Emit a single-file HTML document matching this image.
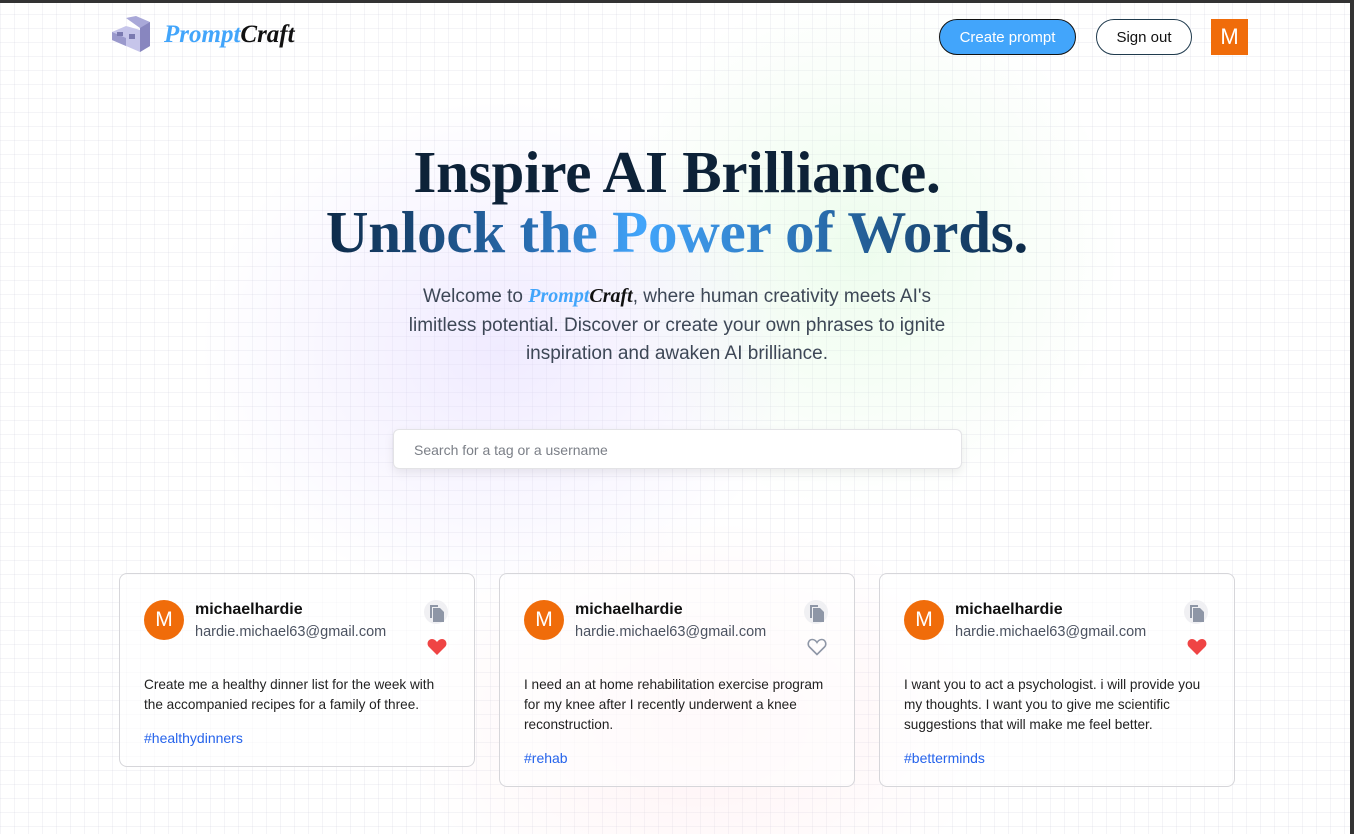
<!DOCTYPE html>
<html><head><meta charset="utf-8"><style>
*{box-sizing:border-box;margin:0;padding:0}
body{width:1354px;height:834px;overflow:hidden;font-family:"Liberation Sans",sans-serif;background:#fff;position:relative;}
.bg{position:absolute;inset:0;background-image:linear-gradient(rgba(200,200,215,.2) 1px,transparent 1px),linear-gradient(90deg,rgba(200,200,215,.2) 1px,transparent 1px);background-size:14px 14px;}
.glow{position:absolute;inset:0;background:radial-gradient(ellipse 300px 250px at 500px 350px,rgba(225,215,255,.5),transparent),radial-gradient(ellipse 260px 260px at 860px 250px,rgba(220,250,220,.5),transparent),radial-gradient(ellipse 300px 200px at 700px 720px,rgba(255,225,230,.45),transparent)}
.rb{position:absolute;right:0;top:0;width:4px;height:834px;background:#333}
.tb{position:absolute;left:0;top:0;width:1354px;height:3px;background:#333}
.nav{position:absolute;top:16px;left:112px;right:106px;height:40px}
.logo{position:absolute;left:0;top:0;display:flex;align-items:center}
.logo span{font-family:"Liberation Serif",serif;font-style:italic;font-weight:bold;font-size:25px;margin-left:12px}
.btn{position:absolute;top:3px;height:36px;border-radius:18px;font-size:15px;display:flex;align-items:center;justify-content:center}
.cp{left:827px;width:137px;background:#42a5fb;color:#fff;border:1.5px solid #111}
.so{left:984px;width:96px;background:#fff;border:1.5px solid #1f3a4d;color:#111}
.av{position:absolute;left:1099px;top:3px;width:37px;height:36px;background:#f06c0a;color:#fff;font-size:22px;display:flex;align-items:center;justify-content:center}
h1{position:absolute;top:142px;left:0;width:1354px;text-align:center;font-family:"Liberation Serif",serif;font-weight:bold;font-size:59px;line-height:60px;color:#0d2238;letter-spacing:-0.2px}
.g{background:linear-gradient(90deg,#0d2a48 0%,#2a6fb4 30%,#42a5fb 45%,#2f7ac0 65%,#0d2a48 100%);-webkit-background-clip:text;background-clip:text;color:transparent}
.sub{position:absolute;top:282px;left:397px;width:560px;text-align:center;font-size:19px;line-height:28.5px;color:#3d4756}
.sub i{font-family:"Liberation Serif",serif;font-weight:bold;font-size:20px}
.search{position:absolute;top:429px;left:393px;width:569px;height:40px;background:#fff;border:1px solid #e3e3e6;border-radius:6px;box-shadow:0 4px 10px rgba(0,0,0,.08);font-size:14px;color:#7b7f87;padding:12px 20px}
.card{position:absolute;top:573px;width:356px;background:rgba(255,255,255,.6);border:1px solid #d6d6da;border-radius:8px;padding:26px 24px}
.card .a{position:absolute;left:24px;top:26px;width:40px;height:40px;border-radius:50%;background:#f06c0a;color:#fff;font-size:21px;display:flex;align-items:center;justify-content:center}
.nm{position:absolute;left:75px;top:27px;font-weight:bold;font-size:16px;color:#111}
.em{position:absolute;left:75px;top:50px;font-size:14.5px;color:#4b5260}
.cpy{position:absolute;right:26px;top:26px}
.hrt{position:absolute;right:27px;top:64px}
.txt{margin-top:75px;font-size:13.6px;line-height:20px;color:#222}
.tag{margin-top:15px;font-size:14px;color:#2563eb}
</style></head><body>
<div class="bg"></div><div class="glow"></div><div class="rb"></div><div class="tb"></div>
<div class="nav">
 <div class="logo"><svg width="40" height="38" viewBox="0 0 40 38"><polygon points="14,2 24,0 38,6 38,30 28,36 28,12" fill="#a9a8d8"/><polygon points="28,12 38,6 38,30 28,36" fill="#8886bf"/><polygon points="0,16 14,10 28,14 28,36 14,30 0,24" fill="#c6c5ea"/><polygon points="0,16 14,22 14,30 0,24" fill="#9a99cc"/><rect x="5" y="16" width="6" height="4" fill="#7a79b0"/><rect x="17" y="18" width="6" height="5" fill="#7a79b0"/></svg><span><span style="color:#42a5fb;margin:0">Prompt</span><span style="color:#111;margin:0">Craft</span></span></div>
 <div class="btn cp">Create prompt</div>
 <div class="btn so">Sign out</div>
 <div class="av">M</div>
</div>
<h1>Inspire AI Brilliance.<br><span class="g">Unlock the Power of Words.</span></h1>
<div class="sub">Welcome to <i style="color:#42a5fb">Prompt</i><i style="color:#111">Craft</i>, where human creativity meets AI's limitless potential. Discover or create your own phrases to ignite inspiration and awaken AI brilliance.</div>
<div class="search">Search for a tag or a username</div>

<div class="card" style="left:119px;height:194px"><div class="a">M</div><div class="nm">michaelhardie</div><div class="em">hardie.michael63@gmail.com</div>
<svg class="cpy" width="24" height="24" viewBox="0 0 24 24"><circle cx="12" cy="12" r="12" fill="#f0f0f3"/><path d="M6 5h8v2H8v11H6z" fill="#8e96a6"/><path d="M9 8h7l4 4v10H9z" fill="#8e96a6"/></svg>
<svg class="hrt" width="20" height="18" viewBox="0 0 20 18"><path d="M10 17 2 9C-1 6 1 1 5 1c2 0 4 1.5 5 3 1-1.5 3-3 5-3 4 0 6 5 3 8z" fill="#ef4444"/></svg>
<div class="txt">Create me a healthy dinner list for the week with the accompanied recipes for a family of three.</div><div class="tag">#healthydinners</div></div>

<div class="card" style="left:499px;height:214px"><div class="a">M</div><div class="nm">michaelhardie</div><div class="em">hardie.michael63@gmail.com</div>
<svg class="cpy" width="24" height="24" viewBox="0 0 24 24"><circle cx="12" cy="12" r="12" fill="#f0f0f3"/><path d="M6 5h8v2H8v11H6z" fill="#8e96a6"/><path d="M9 8h7l4 4v10H9z" fill="#8e96a6"/></svg>
<svg class="hrt" width="20" height="18" viewBox="0 0 20 18"><path d="M10 16.5 2.5 9C0 6.5 1.5 1.5 5.2 1.5c2 0 3.8 1.4 4.8 3 1-1.6 2.8-3 4.8-3 3.7 0 5.2 5 2.7 7.5z" fill="none" stroke="#8e96a6" stroke-width="1.6"/></svg>
<div class="txt">I need an at home rehabilitation exercise program for my knee after I recently underwent a knee reconstruction.</div><div class="tag">#rehab</div></div>

<div class="card" style="left:879px;height:214px"><div class="a">M</div><div class="nm">michaelhardie</div><div class="em">hardie.michael63@gmail.com</div>
<svg class="cpy" width="24" height="24" viewBox="0 0 24 24"><circle cx="12" cy="12" r="12" fill="#f0f0f3"/><path d="M6 5h8v2H8v11H6z" fill="#8e96a6"/><path d="M9 8h7l4 4v10H9z" fill="#8e96a6"/></svg>
<svg class="hrt" width="20" height="18" viewBox="0 0 20 18"><path d="M10 17 2 9C-1 6 1 1 5 1c2 0 4 1.5 5 3 1-1.5 3-3 5-3 4 0 6 5 3 8z" fill="#ef4444"/></svg>
<div class="txt">I want you to act a psychologist. i will provide you my thoughts. I want you to give me scientific suggestions that will make me feel better.</div><div class="tag">#betterminds</div></div>
</body></html>
